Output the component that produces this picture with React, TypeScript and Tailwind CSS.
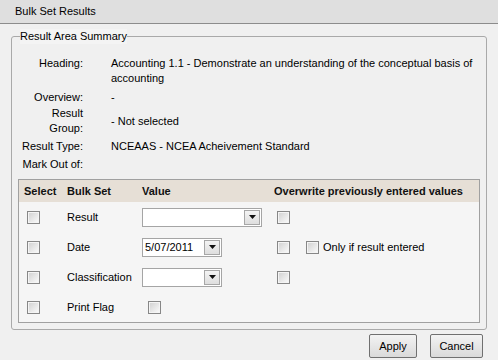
import React from "react";

function Check() {
  return (
    <span className="inline-block w-[13px] h-[13px] border border-[#878787] bg-linear-to-br from-[#cfcfcf] to-[#fcfcfc] shadow-[inset_0_0_0_1px_#f4f4f4] shrink-0" />
  );
}

function DropBtn() {
  return (
    <span className="flex items-center justify-center w-[16px] h-[15px] border border-[#a7a7a7] bg-linear-to-b from-[#f4f4f4] to-[#dedede] shrink-0">
      <svg width="7" height="4" viewBox="0 0 7 4">
        <path d="M0 0h7L3.5 4z" fill="#111" />
      </svg>
    </span>
  );
}

function Select({ width, value = "" }: { width: string; value?: string }) {
  return (
    <div className={`${width} h-[19px] flex items-center justify-between bg-white border border-[#a5a5a5] pl-[2px] pr-[1px]`}>
      <span className="leading-[15px]">{value}</span>
      <DropBtn />
    </div>
  );
}

const summary = [
  {
    label: "Heading:",
    value: (
      <>
        Accounting 1.1 - Demonstrate an understanding of the conceptual basis of
        <br />
        accounting
      </>
    ),
    top: true,
    gap: "mt-0",
  },
  { label: "Overview:", value: "-", gap: "mt-[4px]" },
  {
    label: (
      <>
        Result
        <br />
        Group:
      </>
    ),
    value: "- Not selected",
    gap: "mt-[1px]",
  },
  { label: "Result Type:", value: "NCEAAS - NCEA Acheivement Standard", gap: "mt-[3px]" },
  { label: "Mark Out of:", value: "", gap: "mt-[3px]" },
];

export default function App() {
  return (
    <div className="w-[498px] h-[360px] bg-[#f0f0f0] text-[11px] leading-[15px] text-black font-['Liberation_Sans',Arial,sans-serif] overflow-hidden">
      {/* Title bar */}
      <div className="h-[24px] bg-[#dfdfdf] border-b border-[#8c8c8c] pl-[15px] flex items-center">
        Bulk Set Results
      </div>

      <div className="pl-[11px] pr-[11px] pt-[5px]">
        <fieldset className="border border-[#a9a9a9] rounded-[3px] px-[6px] pb-[6px]">
          <legend className="ml-[2px] leading-[15px] bg-[#f4f4f4]">Result Area Summary</legend>

          <div className="flex flex-col pt-[12px]">
            {summary.map((row, i) => (
              <div key={i} className={`flex ${row.gap} ${row.top ? "items-start" : "items-center"}`}>
                <div className="w-[65px] text-right shrink-0">{row.label}</div>
                <div className="pl-[28px]">{row.value}</div>
              </div>
            ))}
          </div>

          {/* Bulk set table */}
          <div className="mt-[7px] border border-[#a0a0a0] bg-[#f5f5f5]">
            <div className="h-[22px] bg-[#e6dfd6] flex items-center font-bold text-[#111]">
              <div className="w-[48px] pl-[5px]">Select</div>
              <div className="w-[75px]">Bulk Set</div>
              <div className="w-[132px]">Value</div>
              <div>Overwrite previously entered values</div>
            </div>

            <div className="h-[30px] flex items-center">
              <div className="w-[48px] pl-[8px] flex"><Check /></div>
              <div className="w-[75px]">Result</div>
              <div className="w-[132px]"><Select width="w-[120px]" /></div>
              <div className="pl-[3px] flex"><Check /></div>
            </div>

            <div className="h-[30px] flex items-center">
              <div className="w-[48px] pl-[8px] flex"><Check /></div>
              <div className="w-[75px]">Date</div>
              <div className="w-[132px]"><Select width="w-[80px]" value="5/07/2011" /></div>
              <div className="pl-[3px] flex items-center">
                <Check />
                <span className="ml-[16px] flex items-center gap-[4px]">
                  <Check />
                  Only if result entered
                </span>
              </div>
            </div>

            <div className="h-[30px] flex items-center">
              <div className="w-[48px] pl-[8px] flex"><Check /></div>
              <div className="w-[75px]">Classification</div>
              <div className="w-[132px]"><Select width="w-[80px]" /></div>
              <div className="pl-[3px] flex"><Check /></div>
            </div>

            <div className="h-[30px] flex items-center">
              <div className="w-[48px] pl-[8px] flex"><Check /></div>
              <div className="w-[75px]">Print Flag</div>
              <div className="w-[132px] pl-[6px] flex"><Check /></div>
            </div>
          </div>
        </fieldset>

        <div className="flex justify-end gap-[13px] pt-[4px] pr-[4px]">
          <button className="w-[48px] h-[24px] border border-[#707070] rounded-[2px] bg-linear-to-b from-[#f3f3f3] to-[#dadada]">
            Apply
          </button>
          <button className="w-[53px] h-[24px] border border-[#707070] rounded-[2px] bg-linear-to-b from-[#f3f3f3] to-[#dadada]">
            Cancel
          </button>
        </div>
      </div>
    </div>
  );
}
